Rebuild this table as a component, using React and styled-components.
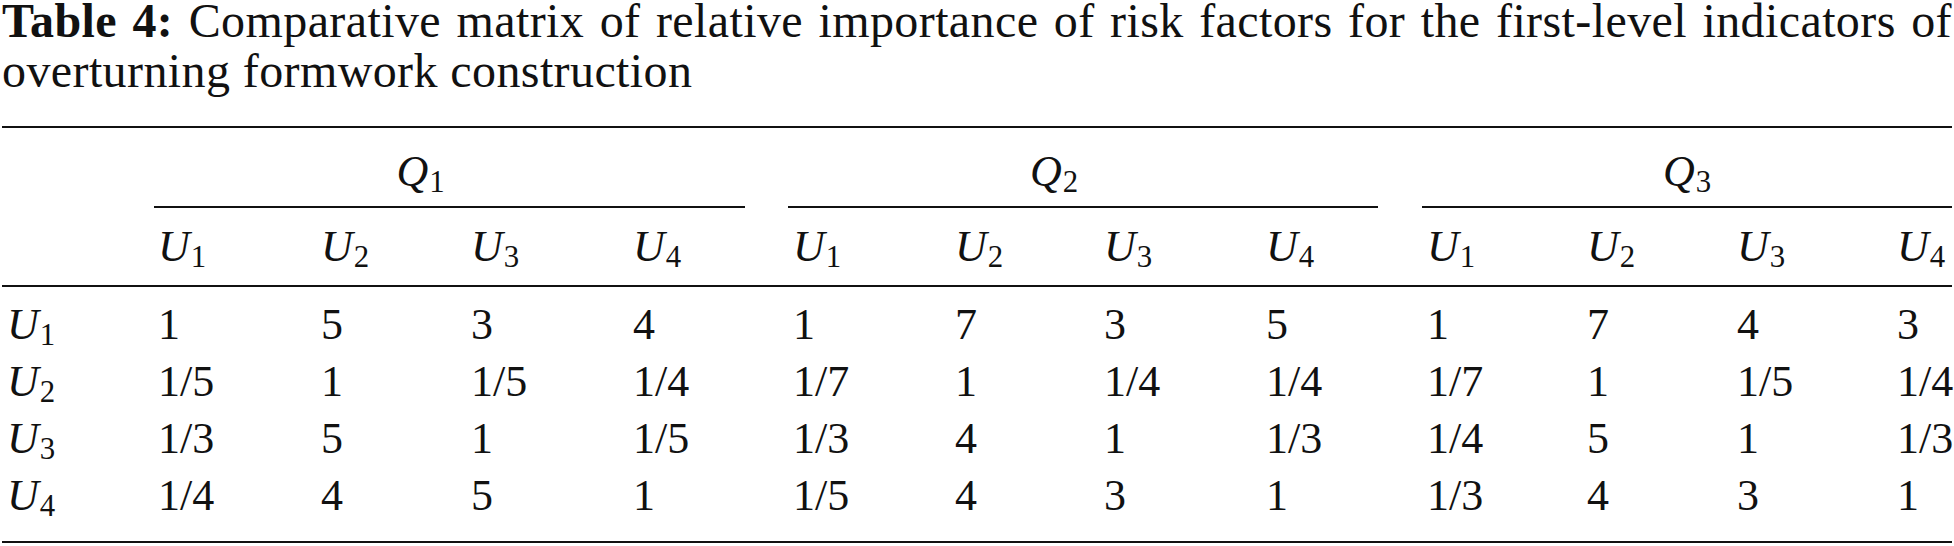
import React from 'react';
import styled, { createGlobalStyle, css } from 'styled-components';

const serif = css`
  font-family: 'Liberation Serif', 'DejaVu Serif', serif;
`;

const GlobalStyle = createGlobalStyle`
  html, body {
    margin: 0;
    background: #fff;
  }

  body {
    color: #111;
    font-family: 'Liberation Serif', 'DejaVu Serif', serif;
  }
`;

const Page = styled.div`
  width: 1950px;
  padding: 0 2px;
`;

const Caption = styled.p`
  ${serif};
  margin: -4px 0 30px;
  font-size: 48px;
  line-height: 50px;
  letter-spacing: 0.4px;
  text-align: justify;

  strong {
    font-weight: 700;
  }
`;

const Table = styled.table`
  ${serif};
  width: 1950px;
  table-layout: fixed;
  border-collapse: separate;
  border-spacing: 0;
  border-top: 2px solid #111;
  border-bottom: 2px solid #111;
  color: #111;
  font-size: 44px;
  font-weight: 400;
  white-space: nowrap;
`;

const GroupCell = styled.th`
  ${serif};
  padding: 20px 0 0;
  font-weight: 400;
  line-height: 48px;
  text-align: left;
`;

const GroupRule = styled.div`
  margin: 0 ${({ $trim }) => $trim}px 0 ${({ $lead }) => $lead}px;
  padding: 0 ${({ $shift }) => $shift}px 10px 0;
  border-bottom: 2px solid #111;
  text-align: center;
`;

const HeadCell = styled.th`
  ${serif};
  padding: 15px 0 14px 5px;
  border-bottom: 2px solid #111;
  font-weight: 400;
  line-height: 48px;
  text-align: left;
`;

const Cell = styled.td`
  ${serif};
  padding: ${({ $first }) => ($first ? '9px' : '0')} 0
    ${({ $last }) => ($last ? '17px' : '0')} 5px;
  font-size: 44px;
  line-height: 57px;
  text-align: left;
  vertical-align: top;
`;

const Sym = styled.span`
  ${serif};
  font-style: italic;
`;

const Sub = styled.sub`
  ${serif};
  font-style: normal;
  font-size: 0.7em;
  line-height: 0;
  vertical-align: -6px;
  margin-left: 1px;
`;

const Var = ({ name, index }) => (
  <Sym>
    {name}
    <Sub>{index}</Sub>
  </Sym>
);

const widths = [151, 163, 150, 162, 160, 162, 149, 162, 161, 160, 150, 160, 60];

const groups = [
  { index: 1, lead: 1, trim: 43, shift: 58 },
  { index: 2, lead: 0, trim: 44, shift: 58 },
  { index: 3, lead: 0, trim: 0, shift: 0 },
];

// one row per U, Q1 | Q2 | Q3 values side by side
const matrix = [
  ['1', '5', '3', '4', '1', '7', '3', '5', '1', '7', '4', '3'],
  ['1/5', '1', '1/5', '1/4', '1/7', '1', '1/4', '1/4', '1/7', '1', '1/5', '1/4'],
  ['1/3', '5', '1', '1/5', '1/3', '4', '1', '1/3', '1/4', '5', '1', '1/3'],
  ['1/4', '4', '5', '1', '1/5', '4', '3', '1', '1/3', '4', '3', '1'],
];

const App = () => (
  <>
    <GlobalStyle />
    <Page>
      <Caption>
        <strong>Table 4:</strong> Comparative matrix of relative importance of risk factors for
        the first-level indicators of overturning formwork construction
      </Caption>

      <Table>
        <colgroup>
          {widths.map((w, i) => (
            <col key={i} style={{ width: w }} />
          ))}
        </colgroup>
        <thead>
          <tr>
            <GroupCell />
            {groups.map((g) => (
              <GroupCell key={g.index} colSpan={g.index === 3 ? 5 : 4}>
                <GroupRule $lead={g.lead} $trim={g.trim} $shift={g.shift}>
                  <Var name="Q" index={g.index} />
                </GroupRule>
              </GroupCell>
            ))}
          </tr>
          <tr>
            <HeadCell />
            {[0, 1, 2].flatMap((q) =>
              [1, 2, 3, 4].map((u) => (
                <HeadCell key={`${q}-${u}`}>
                  <Var name="U" index={u} />
                </HeadCell>
              ))
            )}
            <HeadCell />
          </tr>
        </thead>
        <tbody>
          {matrix.map((row, r) => (
            <tr key={r}>
              <Cell $first={r === 0} $last={r === matrix.length - 1}>
                <Var name="U" index={r + 1} />
              </Cell>
              {row.map((v, c) => (
                <Cell key={c} $first={r === 0} $last={r === matrix.length - 1}>
                  {v}
                </Cell>
              ))}
              <Cell $first={r === 0} $last={r === matrix.length - 1} />
            </tr>
          ))}
        </tbody>
      </Table>
    </Page>
  </>
);

export default App;
